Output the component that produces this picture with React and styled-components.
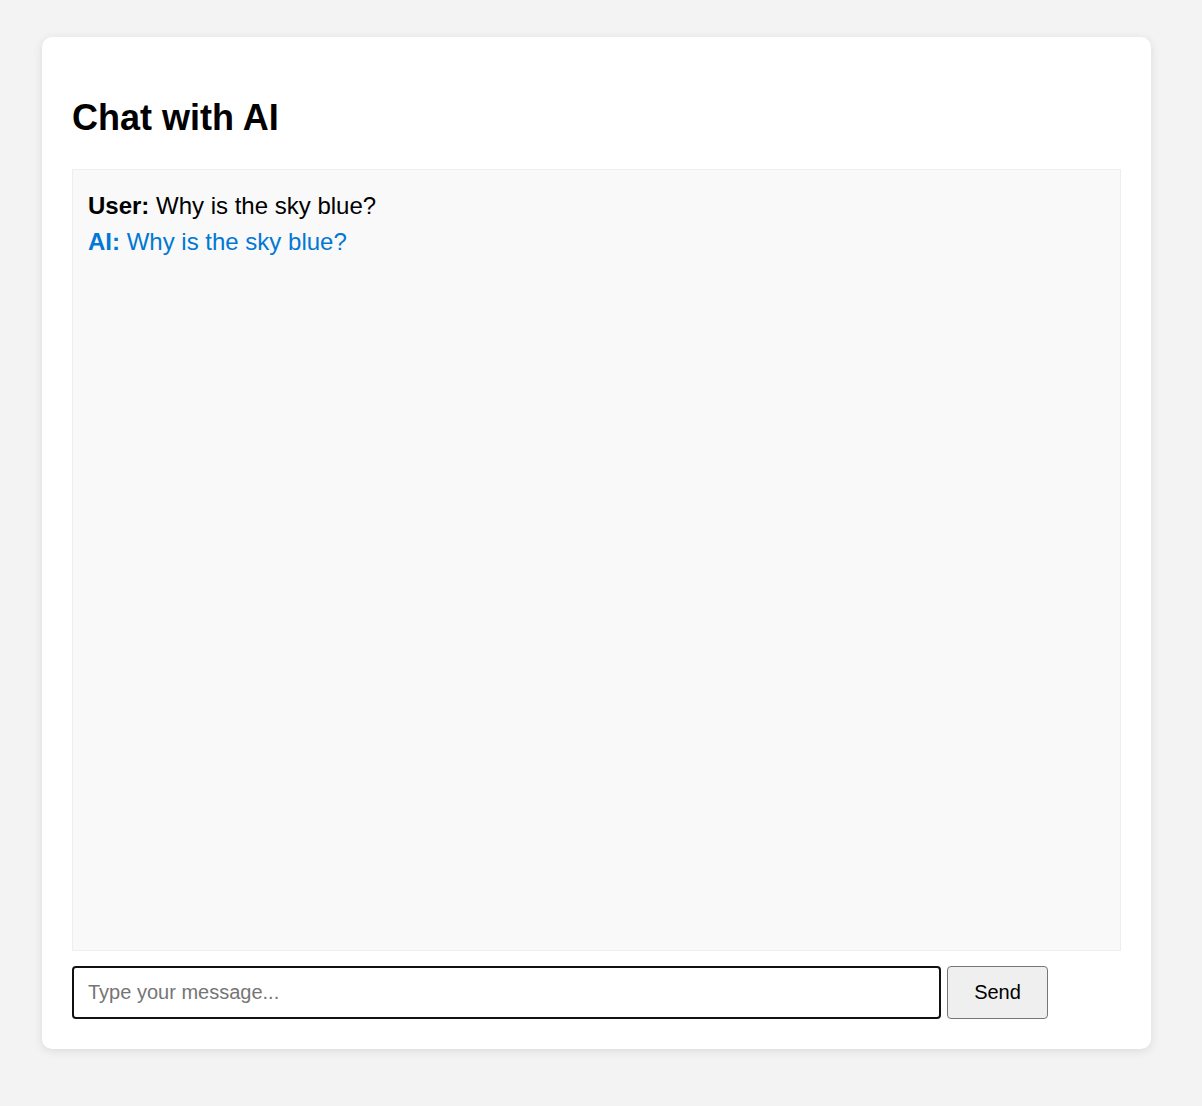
import React from "react";
import styled, { createGlobalStyle } from "styled-components";

const Global = createGlobalStyle`
  html, body { margin: 0; padding: 0; background: #f3f3f3; }
  body { font-family: "Liberation Sans", Arial, sans-serif; }
  * { box-sizing: border-box; }
`;

const Page = styled.div`
  padding: 37px 0 57px 42px;
`;

const Card = styled.div`
  width: 1109px;
  background: #fff;
  border-radius: 10px;
  padding: 0 30px 30px;
  box-shadow: 0 2px 10px rgba(0, 0, 0, 0.1);
  display: flow-root;
`;

const Title = styled.h1`
  margin: 61px 0 31px;
  font-size: 36px;
  line-height: 40px;
  font-weight: 700;
  color: #000;
`;

const ChatBox = styled.div`
  height: 782px;
  background: #f9f9f9;
  border: 1px solid #eee;
  padding: 18px 15px 16px;
  overflow-y: auto;
`;

const Message = styled.div`
  font-size: 24px;
  line-height: 36px;
  color: ${(p) => (p.$ai ? "#0078d4" : "#000")};
`;

const InputRow = styled.form`
  display: flex;
  align-items: stretch;
  gap: 6px;
  margin-top: 15px;
`;

const Input = styled.input`
  width: 869px;
  height: 53px;
  border: 2px solid #111;
  border-radius: 4px;
  padding: 0 14px;
  font-family: "Liberation Sans", Arial, sans-serif;
  font-size: 20px;
  color: #000;
  outline: none;
  &::placeholder { color: #757575; }
`;

const Button = styled.button`
  width: 101px;
  height: 53px;
  background: #efefef;
  border: 1px solid #767676;
  border-radius: 4px;
  font-family: "Liberation Sans", Arial, sans-serif;
  font-size: 20px;
  color: #000;
  cursor: pointer;
`;

export default function App() {
  return (
    <>
      <Global />
      <Page>
        <Card>
          <Title>Chat with AI</Title>
          <ChatBox>
            <Message>
              <strong>User:</strong> Why is the sky blue?
            </Message>
            <Message $ai>
              <strong>AI:</strong> Why is the sky blue?
            </Message>
          </ChatBox>
          <InputRow onSubmit={(e) => e.preventDefault()}>
            <Input placeholder="Type your message..." />
            <Button type="submit">Send</Button>
          </InputRow>
        </Card>
      </Page>
    </>
  );
}
